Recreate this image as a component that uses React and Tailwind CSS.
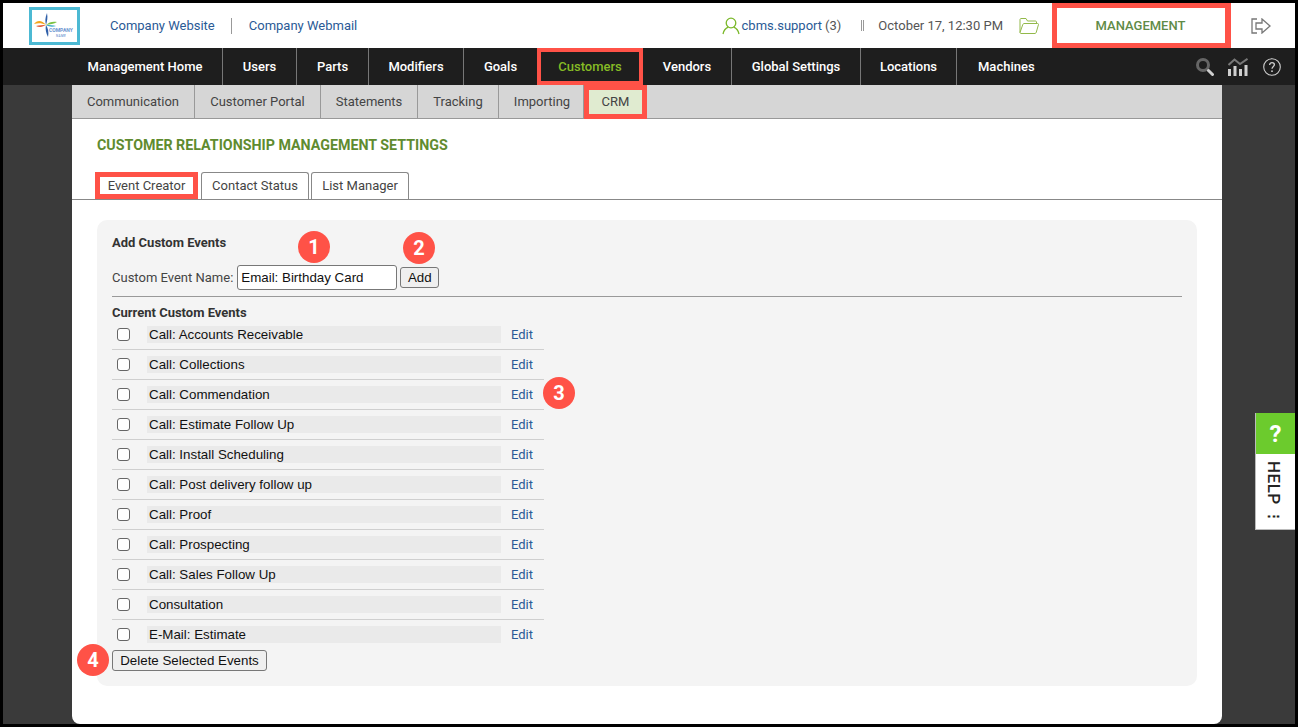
import { useState } from 'react';

const topNav = [
  ['Management Home', 'w-[155px] border-r'],
  ['Users', 'w-[74px] border-r'],
  ['Parts', 'w-[72px] border-r'],
  ['Modifiers', 'w-[95px] border-r'],
  ['Goals', 'w-[73px]'],
];
const topNavRight = [
  ['Vendors', 'w-[89px] border-r'],
  ['Global Settings', 'w-[129px] border-r'],
  ['Locations', 'w-[96px] border-r'],
  ['Machines', 'px-[21px]'],
];
const subNav = [
  ['Communication', 'w-[123px]'],
  ['Customer Portal', 'w-[126px]'],
  ['Statements', 'w-[97px]'],
  ['Tracking', 'w-[81px]'],
  ['Importing', 'w-[85px] pl-[2px]'],
];
const events = [
  'Call: Accounts Receivable',
  'Call: Collections',
  'Call: Commendation',
  'Call: Estimate Follow Up',
  'Call: Install Scheduling',
  'Call: Post delivery follow up',
  'Call: Proof',
  'Call: Prospecting',
  'Call: Sales Follow Up',
  'Consultation',
  'E-Mail: Estimate',
];

const Badge = ({ n, className }) => (
  <div className={`absolute flex h-[32px] w-[32px] items-center justify-center rounded-full bg-[#ff5247] text-[20px] font-bold text-white ${className}`}>
    {n}
  </div>
);

const Logo = () => (
  <div className="flex h-[38px] w-[51px] items-center justify-center border-[3px] border-[#4cb9d3] bg-white">
    <svg width="45" height="32" viewBox="0 0 45 32">
      <path d="M15 3 C13 8 13 11 14 15 C15 11 16 8 15 3 Z" fill="#2f5fa8" />
      <path d="M16 27 C17 22 16 18 14 15 C13 19 14 23 16 27 Z" fill="#2f5fa8" />
      <path d="M2 14 C5 10 10 10 14 15 C10 13 6 13 2 14 Z" fill="#f4a51c" />
      <path d="M4 16 C7 15 10 15 14 15 C10 17 7 18 4 16 Z" fill="#e5603f" />
      <path d="M25 12 C21 11 17 12 14 15 C18 14 22 14 25 12 Z" fill="#7cc243" />
      <path d="M24 16 C21 17 17 17 14 15 C18 15 21 15 24 16 Z" fill="#3aa7c9" />
      <text x="17" y="22" fontSize="5" fontWeight="700" fill="#6a94cf" fontFamily="Roboto, sans-serif">COMPANY</text>
      <text x="24" y="27" fontSize="3" fontWeight="500" letterSpacing="0.4" fill="#6a94cf" fontFamily="Roboto, sans-serif">NAME</text>
    </svg>
  </div>
);

const App = () => {
  const [name, setName] = useState('Email: Birthday Card');

  return (
    <div className="relative flex h-[727px] w-[1298px] flex-col overflow-hidden border-[3px] border-black bg-[#3a3a3a] font-['Roboto',sans-serif]">
      {/* header */}
      <div className="flex h-[45px] shrink-0 items-center bg-white">
        <div className="ml-[26px]"><Logo /></div>
        <a className="ml-[30px] text-[13px] text-[#2a5a96]">Company Website</a>
        <div className="ml-[16px] mr-[17px] h-[16px] w-px bg-[#999]" />
        <a className="text-[13px] text-[#2a5a96]">Company Webmail</a>
        <svg className="ml-auto" width="18" height="18" viewBox="0 0 18 18" fill="none" stroke="#7ab829" strokeWidth="1.3">
          <circle cx="9" cy="6" r="4.8" />
          <path d="M1 17 C1.8 13 4 11.2 6.2 10.2 M17 17 C16.2 13 14 11.2 11.8 10.2" />
        </svg>
        <span className="ml-[2px] text-[13px] text-[#2a5a96]">cbms.support</span>
        <span className="ml-[3px] text-[13px] text-[#555]">(3)</span>
        <span className="ml-[20px] h-[11px] w-[3px] border-x border-[#999]" />
        <span className="ml-[14px] text-[13px] text-[#555]">October 17, 12:30 PM</span>
        <svg className="ml-[16px]" width="20" height="18" viewBox="0 0 20 18" fill="none" stroke="#93b94a" strokeWidth="1">
          <path d="M1 15.5 V2.5 C1 2 1.5 1.5 2 1.5 H7 L8.5 4 H16.5 C17 4 17.5 4.5 17.5 5 V6.5" />
          <path d="M1 15.5 C1 16 1.5 16.5 2 16.5 H16 C16.5 16.5 17 16 17.2 15.5 L19.5 7.5 C19.6 7 19.2 6.5 18.7 6.5 H5 C4.5 6.5 4 7 3.8 7.5 Z" />
        </svg>
        <div className="ml-[13px] flex h-[45px] w-[179px] items-center justify-center border-[5px] border-r-[6px] border-[#ff5247] pr-[1px] text-[13px] font-medium text-[#5f8b47]">
          MANAGEMENT
        </div>
        <svg className="ml-[20px] mr-[24px]" width="20" height="16" viewBox="0 0 20 16" fill="none" stroke="#777" strokeWidth="1.3">
          <path d="M6 1 H1 V15 H6" />
          <path d="M5 5 H11 V1 L19 8 L11 15 V11 H5 Z" />
        </svg>
      </div>

      {/* main nav */}
      <div className="flex h-[37px] shrink-0 items-stretch bg-[#1e1e1e] pl-[65px] text-[13px] font-medium text-white">
        {topNav.map(([item, cls]) => (
          <div key={item} className={`flex items-center justify-center border-[#777] ${cls}`}>{item}</div>
        ))}
        <div className="flex w-[106px] items-center justify-center border-[4px] border-[#ff5247] text-[#86bb25]">Customers</div>
        {topNavRight.map(([item, cls]) => (
          <div key={item} className={`flex items-center justify-center border-[#777] ${cls}`}>{item}</div>
        ))}
        <div className="ml-auto mr-[14px] flex items-center gap-[14px]">
          <svg width="18" height="18" viewBox="0 0 18 18" fill="none">
            <circle cx="7" cy="7" r="5.5" stroke="#666" strokeWidth="3" />
            <path d="M11 11 L12.5 12.5" stroke="#666" strokeWidth="3" />
            <path d="M12.5 12.5 L16.5 16.5" stroke="#cfcfcf" strokeWidth="3" strokeLinecap="round" />
          </svg>
          <svg width="20" height="18" viewBox="0 0 20 18" fill="#cfcfcf">
            <rect x="0" y="11" width="3" height="7" />
            <rect x="5.5" y="8" width="3" height="10" />
            <rect x="11" y="11" width="3" height="7" />
            <rect x="16.5" y="7" width="3" height="11" />
            <path d="M0.5 7 L6.5 1.5 L12 6 L19.5 0.8" fill="none" stroke="#777" strokeWidth="2" />
          </svg>
          <svg className="ml-px" width="18" height="18" viewBox="0 0 18 18" fill="none" stroke="#cfcfcf" strokeWidth="1.1">
            <circle cx="9" cy="9" r="8.3" />
            <path d="M6.6 7 C6.6 5.4 7.8 4.6 9 4.6 C10.4 4.6 11.4 5.5 11.4 6.8 C11.4 8.4 9 8.6 9 10.8" strokeWidth="1.3" />
            <circle cx="9" cy="13.2" r="0.9" fill="#cfcfcf" stroke="none" />
          </svg>
        </div>
      </div>

      {/* page column */}
      <div className="ml-[69px] mr-[73px] flex min-h-0 flex-1 flex-col rounded-b-[8px] bg-white">
        <div className="flex h-[34px] shrink-0 items-stretch border-b border-[#999] bg-[#d6d6d6] text-[13px] text-[#444]">
          {subNav.map(([item, w]) => (
            <div key={item} className={`flex items-center justify-center border-r border-[#999] ${w}`}>{item}</div>
          ))}
          <div className="-mb-px flex w-[63px] items-center justify-center border-[5px] border-[#ff5247] bg-[#e0ebd0] text-[#444]">CRM</div>
        </div>

        <h1 className="ml-[25px] mt-[18px] text-[14.25px] font-bold leading-[16px] text-[#5f8b2f]">CUSTOMER RELATIONSHIP MANAGEMENT SETTINGS</h1>

        <div className="mt-[19px] flex h-[28px] shrink-0 items-stretch border-b border-[#888] pl-[23px] text-[13px] text-[#444]">
          <div className="flex w-[103px] items-center justify-center border-[5px] border-[#ff5247] bg-white">Event Creator</div>
          <div className="ml-[3px] flex w-[108px] items-center justify-center rounded-t-[3px] border border-b-0 border-[#888]">Contact Status</div>
          <div className="ml-[2px] flex w-[98px] items-center justify-center rounded-t-[3px] border border-b-0 border-[#888]">List Manager</div>
        </div>

        <div className="relative mx-[25px] mt-[20px] h-[466px] rounded-[10px] bg-[#f4f4f4] px-[15px] pt-[16px]">
          <h2 className="text-[13px] font-bold leading-[14px] text-[#333]">Add Custom Events</h2>

          <div className="mt-[15px] flex items-center text-[13px]">
            <span className="text-[#444]">Custom Event Name:</span>
            <input
              value={name}
              onChange={(e) => setName(e.target.value)}
              className="ml-[4px] h-[25px] w-[160px] rounded-[3px] border border-[#777] bg-white px-[3px] font-['Liberation_Sans',sans-serif] text-[13.33px] text-[#111] outline-none"
            />
            <button className="ml-[3px] h-[21px] w-[39px] rounded-[3px] border border-[#777] bg-[#efefef] font-['Liberation_Sans',sans-serif] text-[13.33px] text-[#111]">Add</button>
          </div>

          <div className="mt-[6px] border-t border-[#999]" />
          <h2 className="mt-[9px] text-[13px] font-bold leading-[14px] text-[#333]">Current Custom Events</h2>

          <div className="w-[432px]">
            {events.map((ev, i) => (
              <div key={ev} className={`flex h-[30px] items-center border-b ${i < events.length - 1 ? 'border-[#cfcfcf]' : 'border-transparent'}`}>
                <input type="checkbox" className="ml-[5px] h-[13px] w-[13px] appearance-none rounded-[3px] border border-[#666] bg-white" />
                <div className="ml-[17px] flex h-[17px] w-[354px] items-center bg-[#eaeaea] pl-[2px] font-['Liberation_Sans',sans-serif] text-[13.33px] text-[#111]">{ev}</div>
                <a className="ml-[10px] text-[13px] text-[#2a5a96]">Edit</a>
              </div>
            ))}
          </div>

          <button className="block h-[21px] w-[155px] rounded-[3px] border border-[#777] bg-[#efefef] font-['Liberation_Sans',sans-serif] text-[13.33px] text-[#111]">Delete Selected Events</button>

          <Badge n="1" className="left-[201px] top-[11px]" />
          <Badge n="2" className="left-[306px] top-[12px]" />
          <Badge n="3" className="left-[446px] top-[157px]" />
          <Badge n="4" className="left-[-20px] top-[424px]" />
        </div>
      </div>

      {/* help tab */}
      <div className="absolute right-0 top-[410px] flex w-[40px] flex-col border-l border-b border-[#bbb] bg-white">
        <div className="flex h-[41px] items-center justify-center bg-[#6ccb2d] text-[24px] font-bold text-white">?</div>
        <div className="flex h-[75px] items-start justify-center pr-[4px] pt-[7px]">
          <span className="text-[17px] font-medium leading-[20px] tracking-[0.5px] text-[#222] [writing-mode:vertical-rl]">HELP<span className="ps-[5px] text-[13px] font-bold">⋮</span></span>
        </div>
      </div>
    </div>
  );
};

export default App;
